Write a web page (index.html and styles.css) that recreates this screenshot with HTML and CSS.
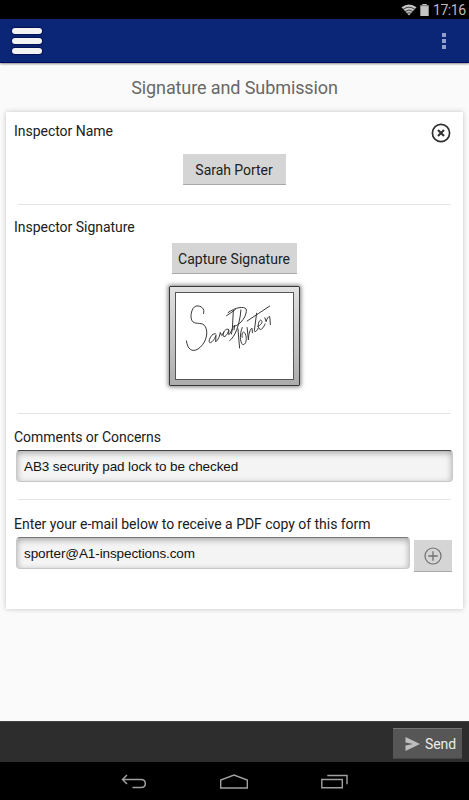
FILE: index.html
```html
<!DOCTYPE html>
<html lang="en">
<head>
<meta charset="utf-8">
<title>Signature and Submission</title>
<link rel="stylesheet" href="styles.css">
</head>
<body>
<div class="status">
  <svg class="wifi" width="16" height="12" viewBox="0 0 16 12"><path d="M.5 3.2Q8-2.4 15.5 3.2L8 11.5Z" fill="#c4c4c4"/><path d="M2 5.4Q8 1 14 5.4M4 7.5Q8 4.5 12 7.5M6 9.4Q8 8 10 9.4" fill="none" stroke="#242424" stroke-width=".8"/></svg>
  <svg class="battery" width="9" height="12" viewBox="0 0 9 12"><path d="M2.3 0h4.4v1.2h2V12H.3V1.2h2Z" fill="#c4c4c4"/><path d="M.3 1.2h8.4v1H.3Z" fill="#777"/></svg>
  <span class="clock">17:16</span>
</div>
<header class="appbar">
  <div class="burger"><i></i><i></i><i></i></div>
  <div class="overflow"><i></i><i></i><i></i></div>
</header>
<main class="page">
  <h1 class="title">Signature and Submission</h1>
  <div class="card">
    <section class="section name">
      <div class="label-row">
        <span class="label">Inspector Name</span>
        <svg class="clear" width="20" height="20" viewBox="0 0 20 20"><circle cx="10" cy="10" r="8.6" fill="none" stroke="#303030" stroke-width="1.7"/><path d="M7 7l6 6M13 7l-6 6" stroke="#303030" stroke-width="2.1"/></svg>
      </div>
      <button class="button person">Sarah Porter</button>
    </section>
    <section class="section signature">
      <span class="label">Inspector Signature</span>
      <button class="button capture">Capture Signature</button>
      <div class="frame">
        <svg class="ink" viewBox="-15 -18 357 264" preserveAspectRatio="none">
          <g fill="none" stroke="#333" stroke-width="3" stroke-linecap="round" stroke-linejoin="round">
            <path d="M69 45C74 30 62 20 46 22C31 27 26 60 36 70C47 80 66 69 75 86C86 109 73 140 52 154C34 165 19 154 17 129"/>
            <path d="M107 108C100 102 87 117 86 130C87 142 101 129 107 112L106 132C114 126 119 113 120 103L124 112C128 112 128 105 131 101"/>
            <path d="M146 94C137 88 128 102 129 114C134 121 144 106 146 96L146 110C150 108 155 97 157 90L160 36M154 108C158 86 162 79 164 82L162 95"/>
            <path d="M139 52Q154 42 166 33M149 128C165 117 180 78 183 34M144 42C165 26 193 22 199 31C204 49 181 82 163 84"/>
            <path d="M174 92L179 151M187 88C179 108 180 132 188 140C199 143 203 121 196 106C190 96 184 107 187 118"/>
            <path d="M202 88L206 126C206 108 212 91 217 90L218 104M202 68Q238 44 271 22M231 44L224 98C226 105 233 97 236 89"/>
            <path d="M234 84C246 82 252 67 243 65C235 69 233 90 242 94C248 94 253 86 257 77M256 58L260 70C262 60 267 54 271 54L273 79"/>
          </g>
        </svg>
      </div>
    </section>
    <section class="section comments">
      <span class="label">Comments or Concerns</span>
      <div class="field">AB3 security pad lock to be checked</div>
    </section>
    <section class="section email">
      <span class="label">Enter your e-mail below to receive a PDF copy of this form</span>
      <div class="email-row">
        <div class="field">sporter@A1-inspections.com</div>
        <button class="button add"><svg width="18" height="18" viewBox="0 0 18 18"><path d="M9 4.3v9.4M4.3 9h9.4" stroke="#707070" stroke-width="1.3"/><circle cx="9" cy="9" r="8" fill="none" stroke="#707070" stroke-width="1.2"/></svg></button>
      </div>
    </section>
  </div>
</main>
<footer class="toolbar">
  <button class="send"><svg width="15" height="14" viewBox="0 0 15 14"><path d="M.5 0L15 7L.5 14V8.4L8 7L.5 5.6Z" fill="#bebebe"/></svg><span>Send</span></button>
</footer>
<nav class="nav">
  <svg width="26" height="16" viewBox="0 0 26 16"><path d="M6 1L1.5 5.5L6 10M2 5.5H20Q24.3 5.5 24.3 9.5Q24.3 13.5 20 13.5H11.5" fill="none" stroke="#a0a0a0" stroke-width="1.5"/></svg>
  <svg width="28" height="16" viewBox="0 0 28 16"><path d="M.7 14V6L14 1L27.3 6V14Z" fill="none" stroke="#a0a0a0" stroke-width="1.4"/></svg>
  <svg width="27" height="16" viewBox="0 0 27 16"><path d="M.8 5.5H21.3V13.7H.8ZM6.3 1.5H26V10.3" fill="none" stroke="#a0a0a0" stroke-width="1.4"/></svg>
</nav>
</body>
</html>
```
FILE: styles.css
```css
* { box-sizing: border-box; }
body {
  margin: 0;
  width: 469px;
  height: 800px;
  display: flex;
  flex-direction: column;
  overflow: hidden;
  background: #fafafa;
  color: #202020;
  font-family: Roboto, "Liberation Sans", sans-serif;
}
svg { display: block; flex: none; }
button { font: inherit; color: inherit; border: 0; padding: 0; }
.status {
  height: 19px;
  flex: none;
  background: #000;
  display: flex;
  justify-content: flex-end;
  align-items: center;
  padding: 0 5px 0 0;
  color: #bababa;
}
.battery { margin: 0 4px 0 3px; }
.clock { width: 31px; font-size: 14px; line-height: 18px; letter-spacing: -.45px; white-space: nowrap; }
.appbar {
  height: 44px;
  flex: none;
  background: #0c2677;
  border-bottom: 1px solid #00085f;
  box-shadow: 0 1px 2px rgba(0, 0, 0, .45);
  display: flex;
  justify-content: space-between;
  padding: 9px 23px 0 12px;
}
.burger { display: flex; flex-direction: column; gap: 4.5px; }
.burger i {
  width: 30px;
  height: 5.6px;
  border-radius: 3px;
  background: #f3f3f3;
  box-shadow: 0 0 1px 1px rgba(0, 0, 60, .55);
}
.overflow { display: flex; flex-direction: column; gap: 2px; padding-top: 5px; }
.overflow i { width: 4px; height: 4px; background: #929fca; }
.page { flex: 1; padding: 0 6px; }
.title {
  height: 49px;
  margin: 0;
  font-size: 18px;
  font-weight: 400;
  line-height: 49px;
  letter-spacing: -.1px;
  text-align: center;
  color: #686868;
}
.card {
  height: 497px;
  background: #fff;
  box-shadow: 0 0 5px rgba(0, 0, 0, .22);
  padding: 0 10px 0 8px;
}
.section { position: relative; display: flex; flex-direction: column; }
.section:not(.email)::after {
  content: "";
  position: absolute;
  left: 4px;
  right: 2px;
  bottom: 0;
  height: 1px;
  background: #e4e4e4;
}
.name { height: 93px; padding-top: 9px; }
.signature { height: 209px; padding-top: 12px; }
.comments { height: 86px; padding-top: 13px; }
.email { padding-top: 14px; }
.label-row { display: flex; justify-content: space-between; height: 33px; padding-right: 2px; }
.clear { margin-top: 2px; }
.label { height: 20px; font-size: 14px; line-height: 20px; letter-spacing: -.03px; white-space: nowrap; }
.button {
  height: 31px;
  flex: none;
  align-self: center;
  background: #d5d5d5;
  border-bottom: 1px solid #aaa;
  padding-top: 2px;
  font-size: 14px;
  letter-spacing: -.04px;
  white-space: nowrap;
}
.person { width: 103px; margin-left: 1px; }
.capture { width: 125px; margin-top: 6px; margin-left: 1px; letter-spacing: .02px; }
.frame {
  width: 131px;
  height: 100px;
  margin: 12px 0 0 1px;
  align-self: center;
  padding: 5px;
  border: 1px solid #383838;
  border-radius: 1px;
  background: linear-gradient(#e2e2e2, #acacac);
  box-shadow: 0 0 4px 1px rgba(0, 0, 0, .5);
}
.ink { width: 119px; height: 88px; background: #fff; border: 1px solid #555; }
.field {
  height: 32px;
  margin-left: 2px;
  padding-left: 7px;
  border: 1px solid #c9c9c9;
  border-top: 1px solid #444;
  border-radius: 4px;
  background: #f4f4f4;
  box-shadow: inset 0 2px 6px rgba(0, 0, 0, .32);
  font: 13.5px/31px "Liberation Sans", sans-serif;
  letter-spacing: -.1px;
  color: #111;
}
.comments .field { width: 437px; margin-top: 3px; }
.email-row { display: flex; margin-top: 3px; gap: 4px; }
.email .field { width: 394px; border-top-color: #777; }
.add { width: 38px; height: 32px; margin-top: 3px; padding: 0; display: grid; place-items: center; }
.toolbar {
  height: 41px;
  flex: none;
  background: #2d2d2d;
  border-top: 1px solid #414141;
  padding: 6px 7px 0 0;
  display: flex;
  justify-content: flex-end;
}
.send {
  width: 69px;
  height: 31px;
  background: #565656;
  border-top: 1px solid #777;
  border-bottom: 1px solid #454545;
  display: flex;
  align-items: center;
  gap: 5px;
  padding-left: 12px;
  color: #ececec;
  font-size: 14px;
  letter-spacing: -.1px;
}
.nav {
  height: 38px;
  flex: none;
  background: #000;
  display: flex;
  padding: 12px 0 0 121px;
  gap: 73px;
}
```
